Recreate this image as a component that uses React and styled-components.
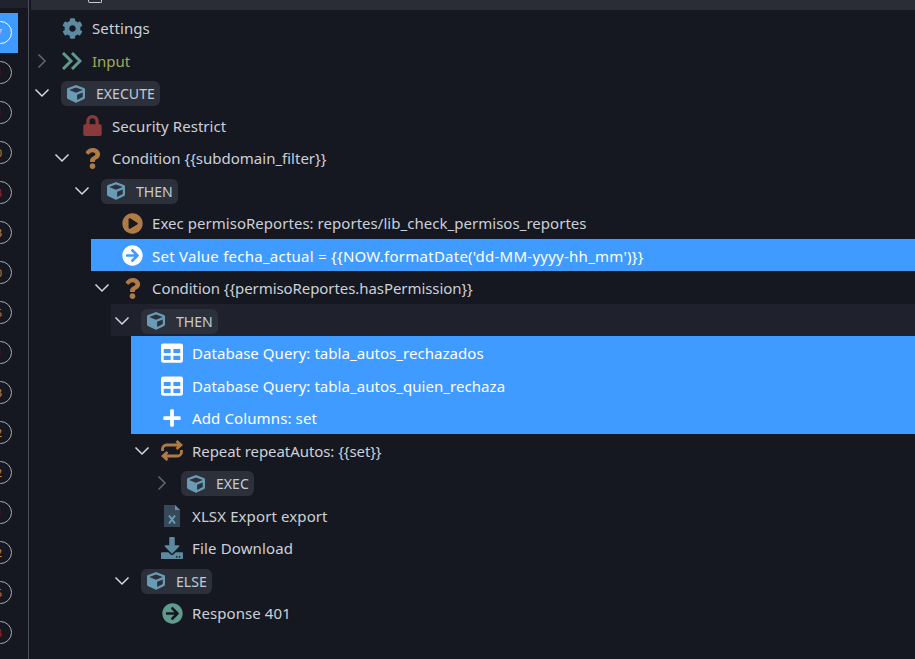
import React from 'react'
import styled, { createGlobalStyle } from 'styled-components'
import {
  FaCog, FaCube, FaLock, FaQuestion, FaPlayCircle,
  FaArrowCircleRight, FaTable, FaPlus, FaDownload,
} from 'react-icons/fa'

const GlobalStyle = createGlobalStyle`
  html, body {
    margin: 0;
    height: 100%;
    background: #161821;
    overflow: hidden;
  }
`

const Page = styled.div`
  display: flex;
  width: 915px;
  height: 659px;
  background: #161821;
  font-family: "Noto Sans", sans-serif;
  font-size: 15px;
  color: #ccd0d8;
`

const Rail = styled.div`
  width: 28px;
  height: 659px;
  flex: none;
  overflow: hidden;
  border-right: 1px solid #4d505b;
  margin-right: 2px;
`

const RailTop = styled.div`
  height: 8px;
  margin-bottom: 5px;
  background: #20232d;
`

const RailItem = styled.div`
  width: 18px;
  height: 38px;
  padding-bottom: 2px;
  display: flex;
  align-items: center;
  background: ${(p) => (p.$active ? '#3f9bff' : 'transparent')};
`

const RailCircle = styled.div`
  flex: none;
  box-sizing: border-box;
  width: 23px;
  height: 23px;
  margin-left: -11px;
  padding-right: 3px;
  border: 1px solid ${(p) => (p.$active ? '#ffffff' : '#a9acb4')};
  border-radius: 50%;
  display: flex;
  align-items: center;
  justify-content: center;
  font-size: 11px;
  color: ${(p) => p.$color};
`

const Main = styled.div`
  flex: 1;
  min-width: 0;
`

const TopBar = styled.div`
  height: 10px;
  margin-bottom: 1.4px;
  padding-left: 57px;
  background: #2a2d38;
  overflow: hidden;
`

const TopIcon = styled.div`
  width: 12px;
  height: 2px;
  border: 1px solid #c9ccd3;
  border-top: 0;
  border-radius: 0 0 2px 2px;
`

const Row = styled.div`
  box-sizing: border-box;
  height: 32.5px;
  padding-top: 1.2px;
  margin-left: ${(p) => p.$depth * 20}px;
  display: flex;
  align-items: center;
  white-space: nowrap;
  background: ${(p) => (p.$selected ? '#3f9bff' : p.$hover ? '#1f222c' : 'transparent')};
  color: ${(p) => (p.$selected ? '#ffffff' : p.$color || '#ccd0d8')};
`

const Toggle = styled.div`
  flex: none;
  width: 22px;
  height: 16px;
  margin-right: 8px;
  display: flex;
  align-items: center;
  justify-content: center;
`

const Chevron = styled.svg`
  width: 16px;
  height: 16px;
  fill: none;
  stroke: ${(p) => (p.$open ? '#d5d8de' : '#62656f')};
  stroke-width: 1.5;
`

const IconSlot = styled.div`
  flex: none;
  width: 22px;
  margin-right: 9px;
  display: flex;
  align-items: center;
  justify-content: center;
  color: ${(p) => (p.$selected ? '#ffffff' : p.$color)};
  font-size: ${(p) => p.$size || 20}px;
`

const Label = styled.span`
  line-height: 20px;
  letter-spacing: ${(p) => p.$spacing || 0}px;
`

const Badge = styled.div`
  height: 25px;
  margin-top: 0.6px;
  padding: 0 5px;
  display: flex;
  align-items: center;
  gap: 10px;
  border-radius: 6px;
  background: #2c303b;
  color: #c5cad3;
  font-size: 14.1px;
`

const BadgeIcon = styled.div`
  width: 20px;
  display: flex;
  align-items: center;
  justify-content: center;
  font-size: 18px;
  color: #6a9bb5;
`

const railItems = [
  ['7', '#f3b8d0'], ['1', '#d08a35'], ['1', '#d08a35'], ['0', '#d0752f'],
  ['4', '#8b2530'], ['3', '#d08a35'], ['0', '#d0752f'], ['5', '#d0752f'],
  ['1', '#d08a35'], ['3', '#d08a35'], ['2', '#d08a35'], ['2', '#d08a35'],
  ['1', '#d08a35'], ['2', '#d08a35'], ['5', '#d0752f'], ['4', '#8b2530'],
]

const InputIcon = () => (
  <svg width="20" height="18" viewBox="0 0 20 18" fill="none" stroke="currentColor" strokeWidth="3">
    <path d="M1 1l8 8-8 8M10 1l8 8-8 8" />
  </svg>
)

const RepeatIcon = () => (
  <svg width="22" height="21" viewBox="0 0 22 21" fill="none" stroke="currentColor" strokeWidth="2.8">
    <path d="M1.5 11V9a4 4 0 0 1 4-4H19M15.5 1L20 5l-4.5 4" />
    <path d="M20.5 10v2a4 4 0 0 1-4 4H3M6.5 12L2 16l4.5 4" />
  </svg>
)

const XlsxIcon = () => (
  <svg width="16" height="22" viewBox="0 0 16 22">
    <path d="M0 0h11l5 5v17H0z" fill="#36495a" />
    <path d="M11 0l5 5h-5z" fill="#6a8ea3" />
    <path d="M5 10.5l6 8M11 10.5l-6 8" stroke="#6a9bb5" strokeWidth="2" />
  </svg>
)

const rows = [
  { depth: 0, label: 'Settings', Icon: FaCog, color: '#5d8aa0', size: 21, spacing: 0.1 },
  { depth: 0, toggle: 'closed', label: 'Input', Icon: InputIcon, color: '#5f9a8d', text: '#a0a95a' },
  { depth: 0, toggle: 'open', badge: 'EXECUTE' },
  { depth: 1, label: 'Security Restrict', Icon: FaLock, color: '#8b3a3a', size: 21, spacing: 0.06 },
  { depth: 1, toggle: 'open', label: 'Condition {{subdomain_filter}}', Icon: FaQuestion, color: '#b07a45', size: 21 },
  { depth: 2, toggle: 'open', badge: 'THEN' },
  { depth: 3, label: 'Exec permisoReportes: reportes/lib_check_permisos_reportes', Icon: FaPlayCircle, color: '#b07a45', size: 21, spacing: 0.035 },
  { depth: 3, label: "Set Value fecha_actual = {{NOW.formatDate('dd-MM-yyyy-hh_mm')}}", Icon: FaArrowCircleRight, color: '#5f9a8d', size: 21, selected: true, spacing: 0.25 },
  { depth: 3, toggle: 'open', label: 'Condition {{permisoReportes.hasPermission}}', Icon: FaQuestion, color: '#b07a45', size: 21, spacing: -0.07 },
  { depth: 4, toggle: 'open', badge: 'THEN', hover: true },
  { depth: 5, label: 'Database Query: tabla_autos_rechazados', Icon: FaTable, size: 22, selected: true, spacing: 0.05 },
  { depth: 5, label: 'Database Query: tabla_autos_quien_rechaza', Icon: FaTable, size: 22, selected: true, spacing: 0.05 },
  { depth: 5, label: 'Add Columns: set', Icon: FaPlus, size: 20, selected: true, spacing: 0.12 },
  { depth: 5, toggle: 'open', label: 'Repeat repeatAutos: {{set}}', Icon: RepeatIcon, color: '#b07a45', spacing: -0.07 },
  { depth: 6, toggle: 'closed', badge: 'EXEC' },
  { depth: 5, label: 'XLSX Export export', Icon: XlsxIcon, spacing: 0.11 },
  { depth: 5, label: 'File Download', Icon: FaDownload, color: '#5d8aa0', size: 22, spacing: 0.15 },
  { depth: 4, toggle: 'open', badge: 'ELSE' },
  { depth: 5, label: 'Response 401', Icon: FaArrowCircleRight, color: '#5f9a8d', size: 21, spacing: 0.08 },
]

const App = () => {
  return (
    <Page>
      <GlobalStyle />
      <Rail>
        <RailTop />
        {railItems.map(([digit, color], i) => (
          <RailItem key={i} $active={i === 0}>
            <RailCircle $active={i === 0} $color={color}>{digit}</RailCircle>
          </RailItem>
        ))}
      </Rail>
      <Main>
        <TopBar>
          <TopIcon />
        </TopBar>
        {rows.map((row, i) => (
          <Row key={i} $depth={row.depth} $selected={row.selected} $hover={row.hover} $color={row.text}>
            <Toggle>
              {row.toggle && (
                <Chevron viewBox="0 0 16 16" $open={row.toggle === 'open'}>
                  <path d={row.toggle === 'open' ? 'M1.5 4.5L8 11l6.5-6.5' : 'M4.5 1.5L11 8l-6.5 6.5'} />
                </Chevron>
              )}
            </Toggle>
            {row.badge ? (
              <Badge>
                <BadgeIcon><FaCube /></BadgeIcon>
                {row.badge}
              </Badge>
            ) : (
              <>
                <IconSlot $color={row.color} $size={row.size} $selected={row.selected}>
                  <row.Icon />
                </IconSlot>
                <Label $spacing={row.spacing}>{row.label}</Label>
              </>
            )}
          </Row>
        ))}
      </Main>
    </Page>
  )
}

export default App
